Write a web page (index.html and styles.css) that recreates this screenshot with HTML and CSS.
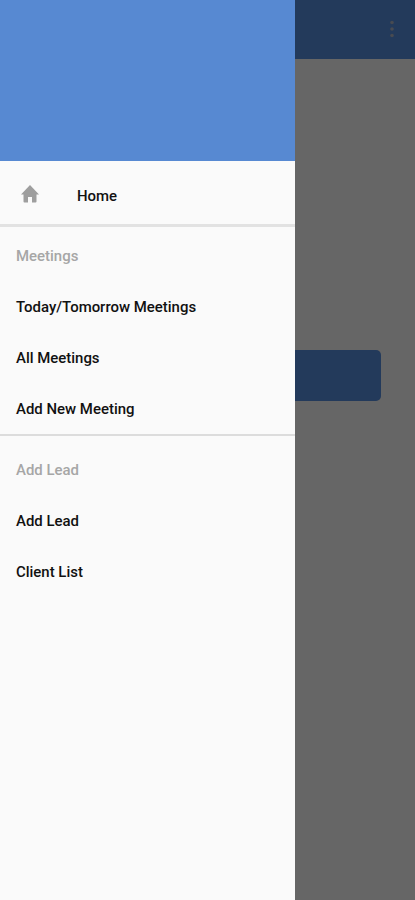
FILE: index.html
```html
<!DOCTYPE html>
<html lang="en">
<head>
<meta charset="utf-8">
<title>Home</title>
<link rel="stylesheet" href="styles.css">
</head>
<body>
<main class="screen">
  <header class="bar"><svg class="more" viewBox="0 0 4 18"><circle cx="2" cy="2.5" r="1.8"/><circle cx="2" cy="9" r="1.8"/><circle cx="2" cy="15.5" r="1.8"/></svg></header>
  <div class="action"></div>
</main>
<aside class="drawer">
  <div class="banner"></div>
  <nav>
    <a class="home"><svg class="house" viewBox="0 0 18 18"><path d="M9 0 18 9.5H15.5V16.5Q15.5 17.5 14.5 17.5H11V12H7V17.5H3.5Q2.5 17.5 2.5 16.5V9.5H0Z"/></svg><span>Home</span></a>
    <section class="group">
      <h2>Meetings</h2>
      <a class="item">Today/Tomorrow Meetings</a>
      <a class="item">All Meetings</a>
      <a class="item">Add New Meeting</a>
    </section>
    <section class="group leads">
      <h2>Add Lead</h2>
      <a class="item">Add Lead</a>
      <a class="item">Client List</a>
    </section>
  </nav>
</aside>
</body>
</html>
```
FILE: styles.css
```css
* { box-sizing: border-box; }
body { margin: 0; height: 900px; overflow: hidden; font: 500 14.95px/20px Roboto, sans-serif; color: #111; }
.screen { height: 900px; background: #666; }
.bar { height: 58.5px; background: #233a5b; display: flex; align-items: center; justify-content: flex-end; padding-right: 21px; }
.more { width: 4px; height: 18px; fill: #484b52; }
.action { width: 346px; height: 50.5px; margin: 291.5px auto 0; border-radius: 5px; background: #233a5b; }
.drawer { position: absolute; top: 0; left: 0; width: 295px; height: 900px; background: #fafafa; }
.banner { height: 160.5px; background: #5789d2; }
.home { height: 63.5px; display: flex; align-items: center; padding: 7px 0 0 21.4px; }
.house { width: 18px; height: 18px; margin: -4px 37.6px 0 0; fill: #9e9e9e; }
.group { border-top: 3px solid #e2e2e2; padding: 6px 0 0 16px; height: 210px; }
.leads { border-top-width: 2px; border-top-color: #dcdcdc; padding-top: 12px; }
h2 { margin: 0; font: inherit; color: #a6a6a6; height: 49px; line-height: 46px; }
.leads h2 { height: 48px; line-height: 44px; }
.item { display: block; height: 51px; line-height: 51px; }
```
